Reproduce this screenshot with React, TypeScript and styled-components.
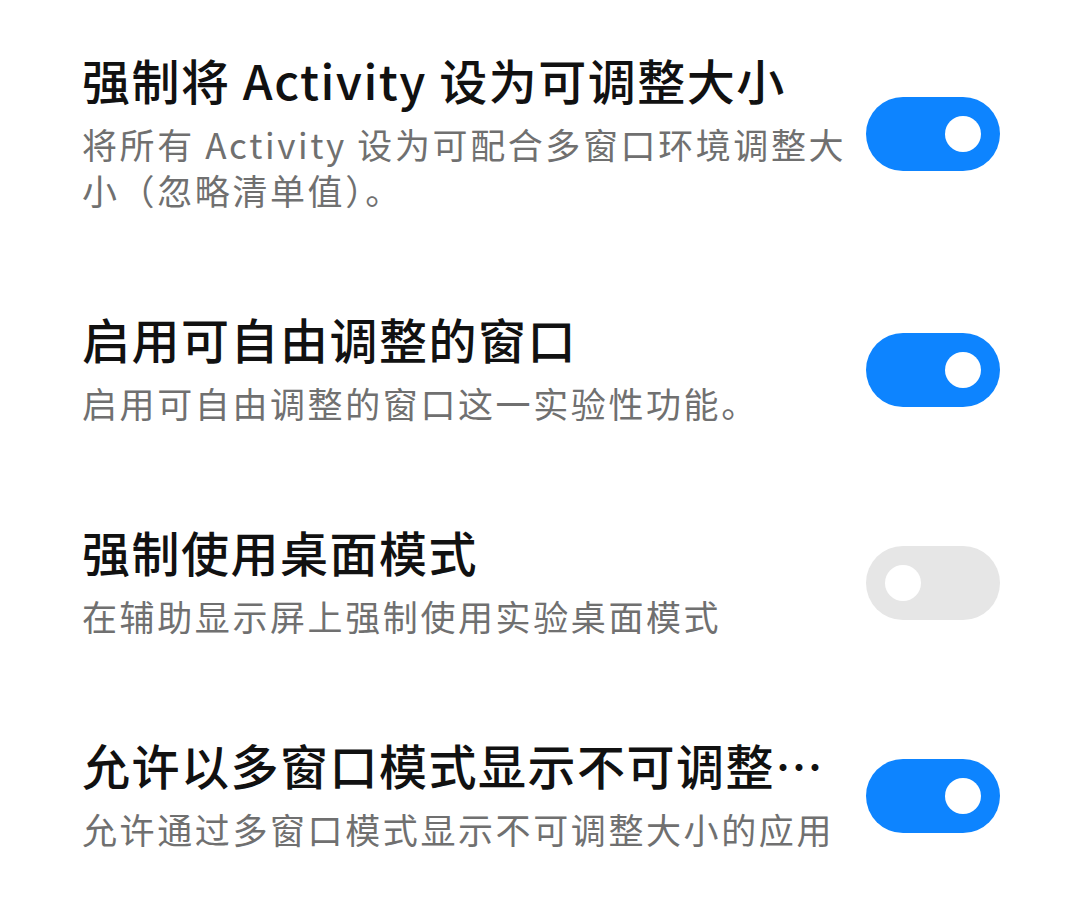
import { createGlobalStyle, styled } from 'styled-components';

const GlobalStyle = createGlobalStyle`
  html, body {
    margin: 0;
    padding: 0;
    background: #ffffff;
  }

  body {
    font-family: 'Noto Sans CJK SC', 'Noto Sans', sans-serif;
    -webkit-font-smoothing: antialiased;
  }
`;

//------LIST-----

const List = styled.div`
  width: 1080px;
  padding: 1px 80px 0 82px;
  box-sizing: border-box;

  display: flex;
  flex-direction: column;
`;

const Row = styled.div`
  display: flex;
  align-items: center;
  gap: 12px;

  padding: 43px 0 47px;
`;

const TextBlock = styled.div`
  flex: 1;
  min-width: 0;

  display: flex;
  flex-direction: column;
`;

const Title = styled.div`
  font-size: 48px;
  line-height: 70px;
  font-weight: 500;
  letter-spacing: 1.5px;
  color: #111111;

  white-space: nowrap;
  overflow: hidden;
  text-overflow: ellipsis;
`;

const Summary = styled.div`
  margin-top: 7px;

  font-size: 35px;
  line-height: 46px;
  letter-spacing: 2.6px;
  color: #707070;
`;

//------SWITCH-----

const Track = styled.div<{ $on: boolean }>`
  flex-shrink: 0;
  width: 134px;
  height: 74px;
  margin-top: 10px;
  padding: 0 19px;
  box-sizing: border-box;
  border-radius: 37px;

  display: flex;
  align-items: center;
  justify-content: ${({ $on }) => ($on ? 'flex-end' : 'flex-start')};

  background-color: ${({ $on }) => ($on ? '#0d84ff' : '#e6e6e6')};
`;

const Knob = styled.div`
  width: 36px;
  height: 36px;
  border-radius: 50%;
  background-color: #ffffff;
`;

const Switch = ({ on }: { on: boolean }) => (
  <Track $on={on}>
    <Knob />
  </Track>
);

const items = [
  {
    title: '强制将 Activity 设为可调整大小',
    summary: '将所有 Activity 设为可配合多窗口环境调整大小（忽略清单值）。',
    on: true,
  },
  {
    title: '启用可自由调整的窗口',
    summary: '启用可自由调整的窗口这一实验性功能。',
    on: true,
  },
  {
    title: '强制使用桌面模式',
    summary: '在辅助显示屏上强制使用实验桌面模式',
    on: false,
  },
  {
    title: '允许以多窗口模式显示不可调整大小的应用',
    summary: '允许通过多窗口模式显示不可调整大小的应用',
    on: true,
  },
];

export default function App() {
  return (
    <>
      <GlobalStyle />
      <List>
        {items.map((item) => (
          <Row key={item.title}>
            <TextBlock>
              <Title>{item.title}</Title>
              <Summary>{item.summary}</Summary>
            </TextBlock>
            <Switch on={item.on} />
          </Row>
        ))}
      </List>
    </>
  );
}
